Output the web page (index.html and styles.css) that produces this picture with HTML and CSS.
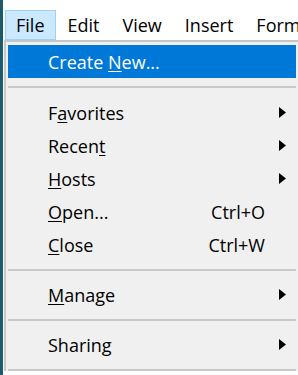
FILE: index.html
```html
<!DOCTYPE html>
<html lang="en">
<head>
  <meta charset="UTF-8" />
  <title>File Menu</title>
  <link rel="stylesheet" href="styles.css">
</head>
<body>

  <div class="desktop">
    <div class="edge"></div>

    <div class="app">
      <nav class="menubar">
        <span class="bar-item open">File</span>
        <span class="bar-item">Edit</span>
        <span class="bar-item">View</span>
        <span class="bar-item">Insert</span>
        <span class="bar-item">Format</span>
      </nav>

      <div class="dropdown">
        <div class="menu-item active">
          <span class="label">Create <u>N</u>ew...</span>
        </div>
        <div class="separator first"></div>

        <div class="menu-item">
          <span class="label">F<u>a</u>vorites</span>
          <svg class="arrow" width="7" height="11" viewBox="0 0 7 11"><path d="M0 0 L7 5.5 L0 11 Z" /></svg>
        </div>
        <div class="menu-item">
          <span class="label">Recen<u>t</u></span>
          <svg class="arrow" width="7" height="11" viewBox="0 0 7 11"><path d="M0 0 L7 5.5 L0 11 Z" /></svg>
        </div>
        <div class="menu-item">
          <span class="label"><u>H</u>osts</span>
          <svg class="arrow" width="7" height="11" viewBox="0 0 7 11"><path d="M0 0 L7 5.5 L0 11 Z" /></svg>
        </div>
        <div class="menu-item">
          <span class="label"><u>O</u>pen...</span>
          <span class="shortcut">Ctrl+O</span>
        </div>
        <div class="menu-item">
          <span class="label"><u>C</u>lose</span>
          <span class="shortcut">Ctrl+W</span>
        </div>
        <div class="separator"></div>

        <div class="menu-item">
          <span class="label"><u>M</u>anage</span>
          <svg class="arrow" width="7" height="11" viewBox="0 0 7 11"><path d="M0 0 L7 5.5 L0 11 Z" /></svg>
        </div>
        <div class="separator"></div>

        <div class="menu-item">
          <span class="label">Sharin<u>g</u></span>
          <svg class="arrow" width="7" height="11" viewBox="0 0 7 11"><path d="M0 0 L7 5.5 L0 11 Z" /></svg>
        </div>
        <div class="separator"></div>
      </div>
    </div>
  </div>

</body>
</html>
```

FILE: styles.css
```css
body {
  margin: 0;
  background-color: #fff;
  font-family: "Open Sans", "Noto Sans", sans-serif;
  font-size: 18px;
  color: #000;
  overflow: hidden;
}

.desktop {
  display: flex;
  height: 375px;
}

.edge {
  width: 3px;
  background-color: #1d5a6b;
  flex-shrink: 0;
}

.app {
  flex: 1;
  min-width: 0;
  overflow: hidden;
}

.menubar {
  display: flex;
  height: 30px;
  padding-top: 10px;
  padding-left: 2px;
  white-space: nowrap;
}

.bar-item {
  display: flex;
  align-items: center;
  padding: 0 10px;
  border: 1px solid transparent;
  margin-right: 1px;
}

.bar-item.open {
  background-color: #cce8ff;
  border-color: #99d1ff;
}

.dropdown {
  width: 288px;
  margin-left: 1px;
  background-color: #f0f0f0;
  border-top: 2px solid #c6c6c6;
  border-left: 2px solid #c6c6c6;
  padding: 3px 2px 0 2px;
}

.menu-item {
  display: flex;
  align-items: center;
  height: 33px;
  padding-left: 40px;
  padding-right: 10px;
}

.menu-item.active {
  background-color: #0078d7;
  color: #fff;
}

.menu-item u {
  text-underline-offset: 2px;
}

.label {
  flex: 1;
}

.shortcut {
  margin-right: 21px;
}

.arrow {
  fill: #000;
}

.separator {
  height: 2px;
  margin: 8px 0 7px 0;
  background-color: #c8c8c8;
}

.separator.first {
  margin-top: 8px;
  margin-bottom: 8px;
}
```
